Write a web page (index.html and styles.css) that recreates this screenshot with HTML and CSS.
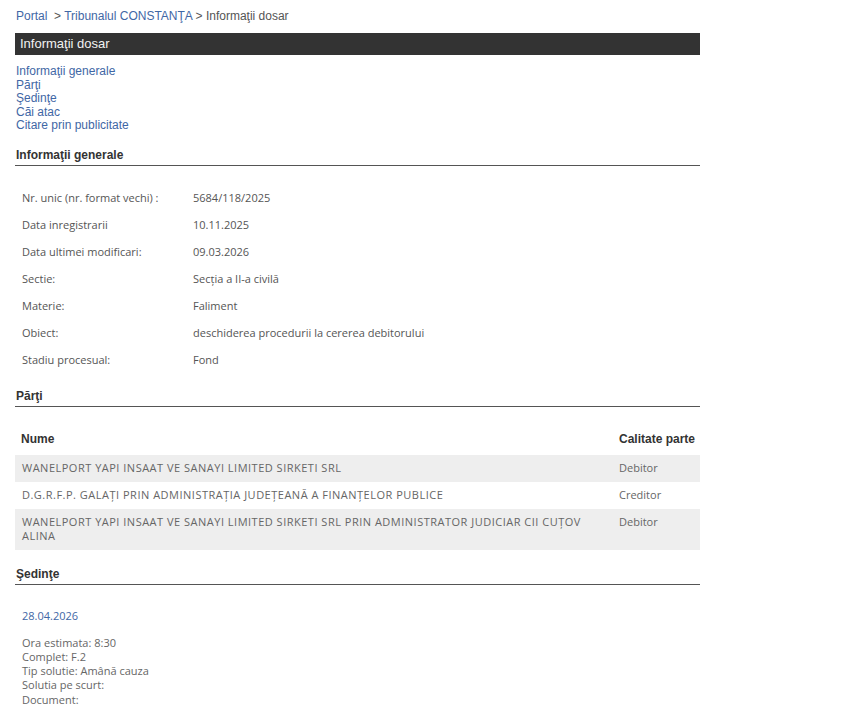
FILE: index.html
```html
<!DOCTYPE html>
<html lang="ro">
<head>
<meta charset="utf-8">
<title>Informaţii dosar</title>
<link rel="stylesheet" href="styles.css">
</head>
<body>
<div class="page">
  <div class="crumbs"><a href="#">Portal</a>&nbsp; &gt; <a href="#">Tribunalul CONSTANŢA</a> &gt; Informaţii dosar</div>
  <div class="bar">Informaţii dosar</div>
  <ul class="toc">
    <li><a href="#">Informaţii generale</a></li>
    <li><a href="#">Părţi</a></li>
    <li><a href="#">Şedinţe</a></li>
    <li><a href="#">Căi atac</a></li>
    <li><a href="#">Citare prin publicitate</a></li>
  </ul>

  <h2 class="sec sec-first">Informaţii generale</h2>
  <table class="info">
    <tr><td class="lbl">Nr. unic (nr. format vechi) :</td><td>5684/118/2025</td></tr>
    <tr><td class="lbl">Data inregistrarii</td><td>10.11.2025</td></tr>
    <tr><td class="lbl">Data ultimei modificari:</td><td>09.03.2026</td></tr>
    <tr><td class="lbl">Sectie:</td><td>Secția a II-a civilă</td></tr>
    <tr><td class="lbl">Materie:</td><td>Faliment</td></tr>
    <tr><td class="lbl">Obiect:</td><td>deschiderea procedurii la cererea debitorului</td></tr>
    <tr><td class="lbl">Stadiu procesual:</td><td>Fond</td></tr>
  </table>

  <h2 class="sec">Părţi</h2>
  <table class="parti">
    <thead>
      <tr><th class="c-name">Nume</th><th class="c-cal">Calitate parte</th></tr>
    </thead>
    <tbody>
      <tr class="alt"><td class="name">WANELPORT YAPI INSAAT VE SANAYI LIMITED SIRKETI SRL</td><td>Debitor</td></tr>
      <tr><td class="name">D.G.R.F.P. GALAȚI PRIN ADMINISTRAȚIA JUDEȚEANĂ A FINANȚELOR PUBLICE</td><td>Creditor</td></tr>
      <tr class="alt"><td class="name">WANELPORT YAPI INSAAT VE SANAYI LIMITED SIRKETI SRL PRIN ADMINISTRATOR JUDICIAR CII CUȚOV ALINA</td><td>Debitor</td></tr>
    </tbody>
  </table>

  <h2 class="sec sec-sed">Şedinţe</h2>
  <div class="sedinta">
    <div class="date">28.04.2026</div>
    <div class="details">
      <div>Ora estimata: 8:30</div>
      <div>Complet: F.2</div>
      <div>Tip solutie: Amână cauza</div>
      <div>Solutia pe scurt:</div>
      <div>Document:</div>
    </div>
  </div>
</div>
</body>
</html>
```

FILE: styles.css
```css
html, body {
  margin: 0;
  padding: 0;
  background: #ffffff;
}

.page {
  width: 685px;
  margin-left: 15px;
  padding-top: 9px;
  font-family: "Liberation Sans", Arial, sans-serif;
  font-size: 12px;
  color: #333;
}

a {
  color: #3f67a5;
  text-decoration: none;
}

.crumbs {
  line-height: 14px;
  padding-left: 1px;
  color: #555;
}

.bar {
  margin-top: 10px;
  height: 22px;
  line-height: 22px;
  background: #333333;
  color: #f2f2f2;
  font-size: 13px;
  padding-left: 5px;
}

.toc {
  list-style: none;
  margin: 10px 0 0 0;
  padding: 0 0 0 1px;
  line-height: 13.5px;
}

.sec {
  margin: 16px 0 0 0;
  font-size: 12px;
  font-weight: bold;
  line-height: 14px;
  color: #333;
  padding: 0 0 3px 1px;
  border-bottom: 1px solid #555;
}

.sec-first {
  margin-top: 15px;
}

.sec-sed {
  margin-top: 17px;
}

.info {
  margin-top: 18px;
  border-collapse: collapse;
  font-family: "Open Sans", "DejaVu Sans", sans-serif;
  font-size: 11px;
  color: #555;
}

.info td {
  height: 27px;
  padding: 0 0 0 7px;
  vertical-align: middle;
  white-space: nowrap;
}

.info td.lbl {
  width: 164px;
}

.parti {
  margin-top: 17px;
  width: 685px;
  border-collapse: collapse;
  font-family: "Open Sans", "DejaVu Sans", sans-serif;
  font-size: 11px;
  color: #666;
}

.parti th {
  font-family: "Liberation Sans", Arial, sans-serif;
  font-size: 12px;
  font-weight: bold;
  color: #333;
  text-align: left;
  height: 31px;
  padding: 0 0 0 6px;
  vertical-align: middle;
}

.parti th.c-name {
  width: 592px;
}

.parti td {
  padding: 6px 6px 7px 6px;
  line-height: 14px;
  vertical-align: top;
}

.parti tr.alt td {
  background: #eeeeee;
}

.parti td.name {
  padding-left: 7px;
  padding-right: 15px;
  letter-spacing: 0.5px;
}

.sedinta {
  padding-left: 7px;
  font-family: "Open Sans", "DejaVu Sans", sans-serif;
  font-size: 11px;
  color: #666;
}

.date {
  margin-top: 24px;
  line-height: 14px;
  color: #3f67a5;
}

.details {
  margin-top: 13px;
  line-height: 14.25px;
}
```
